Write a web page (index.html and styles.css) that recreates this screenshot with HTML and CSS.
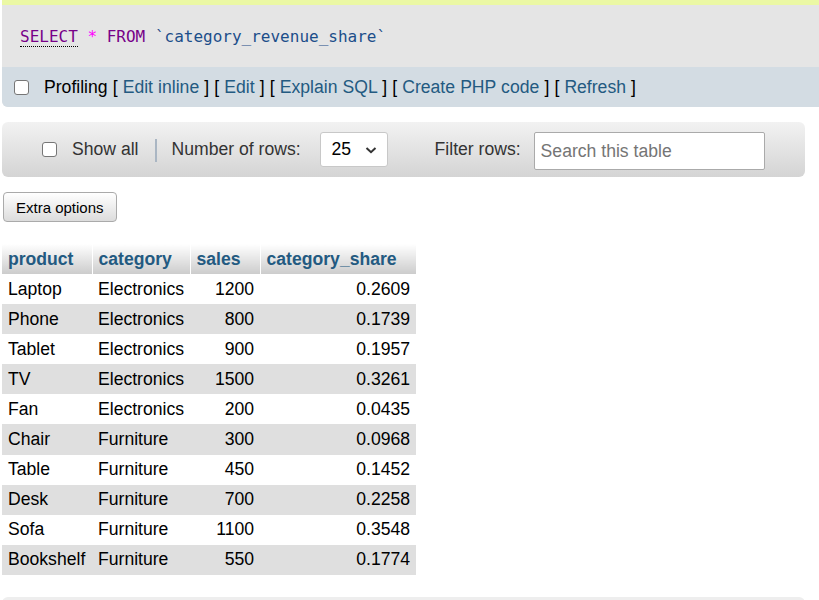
FILE: index.html
```html
<!DOCTYPE html>
<html>
<head>
<meta charset="utf-8">
<link rel="stylesheet" href="styles.css">
</head>
<body>
<div class="success-strip"></div>
<div class="sql-box">
  <div class="sql-code"><span class="kw kw-u">SELECT</span> <span class="op">*</span> <span class="kw">FROM</span> <span class="ident">`category_revenue_share`</span></div>
  <div class="profiling">
    <input type="checkbox" class="cb">
    <span class="plabel">Profiling <span class="br">[</span> <a class="lnk">Edit inline</a> <span class="br">]</span> <span class="br">[</span> <a class="lnk">Edit</a> <span class="br">]</span> <span class="br">[</span> <a class="lnk">Explain SQL</a> <span class="br">]</span> <span class="br">[</span> <a class="lnk">Create PHP code</a> <span class="br">]</span> <span class="br">[</span> <a class="lnk">Refresh</a> <span class="br">]</span></span>
  </div>
</div>

<div class="toolbar">
  <label class="showall"><input type="checkbox" class="cb"> <span>Show all</span></label>
  <span class="sep"></span>
  <span class="lbl">Number of rows:</span>
  <div class="select"><span>25</span>
    <svg width="14" height="10" viewBox="0 0 14 10"><path d="M2.5 3 L7 7.2 L11.5 3" fill="none" stroke="#333" stroke-width="2"/></svg>
  </div>
  <span class="lbl filter">Filter rows:</span>
  <div class="search">Search this table</div>
</div>

<div class="btn-row"><button class="btn">Extra options</button></div>

<table class="data">
  <thead>
    <tr><th class="c1">product</th><th class="c2">category</th><th class="c3">sales</th><th class="c4">category_share</th></tr>
  </thead>
  <tbody>
    <tr><td>Laptop</td><td>Electronics</td><td class="num">1200</td><td class="num">0.2609</td></tr>
    <tr><td>Phone</td><td>Electronics</td><td class="num">800</td><td class="num">0.1739</td></tr>
    <tr><td>Tablet</td><td>Electronics</td><td class="num">900</td><td class="num">0.1957</td></tr>
    <tr><td>TV</td><td>Electronics</td><td class="num">1500</td><td class="num">0.3261</td></tr>
    <tr><td>Fan</td><td>Electronics</td><td class="num">200</td><td class="num">0.0435</td></tr>
    <tr><td>Chair</td><td>Furniture</td><td class="num">300</td><td class="num">0.0968</td></tr>
    <tr><td>Table</td><td>Furniture</td><td class="num">450</td><td class="num">0.1452</td></tr>
    <tr><td>Desk</td><td>Furniture</td><td class="num">700</td><td class="num">0.2258</td></tr>
    <tr><td>Sofa</td><td>Furniture</td><td class="num">1100</td><td class="num">0.3548</td></tr>
    <tr><td>Bookshelf</td><td>Furniture</td><td class="num">550</td><td class="num">0.1774</td></tr>
  </tbody>
</table>

<div class="bottom-box"></div>
</body>
</html>
```

FILE: styles.css
```css
html, body {
  margin: 0;
  padding: 0;
  background: #fff;
}
body {
  font-family: "Liberation Sans", Arial, sans-serif;
  font-size: 17.6px;
  color: #000;
  padding: 0 0 0 2px;
  overflow: hidden;
  height: 600px;
}
.success-strip {
  height: 5px;
  background: #ebf8a4;
  margin-right: -2px;
}
.sql-box {
  background: #e5e5e5;
  border-radius: 0 0 6px 6px;
  margin-right: -10px;
}
.sql-code {
  font-family: "DejaVu Sans Mono", "Liberation Mono", monospace;
  font-size: 16px;
  height: 62px;
  line-height: 64px;
  padding-left: 18px;
  color: #000;
}
.kw { color: #770088; }
.kw-u { border-bottom: 1px dotted #000; line-height: 1.2; display: inline-block; }
.op { color: #ff00ff; }
.ident { color: #1c4e8a; }
.profiling {
  background: #d3dce3;
  height: 40px;
  display: flex;
  align-items: center;
  padding-left: 12px;
  border-radius: 0 0 0 6px;
  white-space: nowrap;
}
.cb {
  appearance: none;
  -webkit-appearance: none;
  width: 15px;
  height: 15px;
  margin: 0;
  border: 1.5px solid #767676;
  border-radius: 3px;
  background: #fff;
  box-sizing: border-box;
}
.plabel { margin-left: 15px; color: #000; word-spacing: 0.22px; }
.br { color: #000; }
.lnk { color: #235a81; text-decoration: none; }

.toolbar {
  margin-top: 15px;
  width: 803px;
  height: 55px;
  box-sizing: border-box;
  background: linear-gradient(#f2f2f2, #d4d4d4);
  border-radius: 6px;
  display: flex;
  align-items: center;
  padding-left: 40px;
  color: #333;
}
.showall { display: flex; align-items: center; }
.showall span { margin-left: 15px; }
.sep {
  width: 2px;
  height: 23px;
  background: #aab6c3;
  margin: 1px 15px 0 16px;
}
.lbl { color: #333; }
.select {
  margin-left: 19px;
  width: 68px;
  height: 35px;
  box-sizing: border-box;
  background: #fff;
  border: 1px solid #c8c8c8;
  border-radius: 3px;
  display: flex;
  align-items: center;
  justify-content: space-between;
  padding: 0 9px 0 11px;
  color: #000;
}
.select svg { margin-top: 1px; }
.filter { margin-left: 47px; }
.search {
  margin-left: 13px;
  width: 231px;
  height: 38px;
  box-sizing: border-box;
  background: #fff;
  border: 1px solid #aaa;
  border-radius: 2px;
  display: flex;
  align-items: center;
  padding-left: 6px;
  color: #757575;
  margin-top: 3px;
}

.btn-row { margin-top: 15px; }
.btn {
  font-family: "Liberation Sans", Arial, sans-serif;
  font-size: 15px;
  height: 30px;
  margin-left: 1px;
  padding: 0 12px;
  background: linear-gradient(#ffffff, #dcdcdc);
  border: 1px solid #aaa;
  border-radius: 4px;
  color: #000;
}

.data {
  margin-top: 22px;
  border-collapse: collapse;
  white-space: nowrap;
}
.data th {
  text-align: left;
  font-weight: bold;
  color: #235a81;
  background: linear-gradient(#ffffff, #cccccc);
  height: 30px;
  padding: 0 6px;
  border-right: 1px solid #fff;
  box-sizing: border-box;
}
.data th.c1 { width: 90px; }
.data th.c2 { width: 98px; }
.data th.c3 { width: 70px; }
.data th.c4 { width: 156px; }
.data th:last-child { border-right: none; }
.data td {
  height: 30.1px;
  padding: 0 6px;
  box-sizing: border-box;
}
.data td.num { text-align: right; }
.data tbody tr:nth-child(even) { background: #dfdfdf; }

.bottom-box {
  margin-top: 22px;
  width: 803px;
  height: 20px;
  background: #eee;
  border-radius: 6px 6px 0 0;
}
```
